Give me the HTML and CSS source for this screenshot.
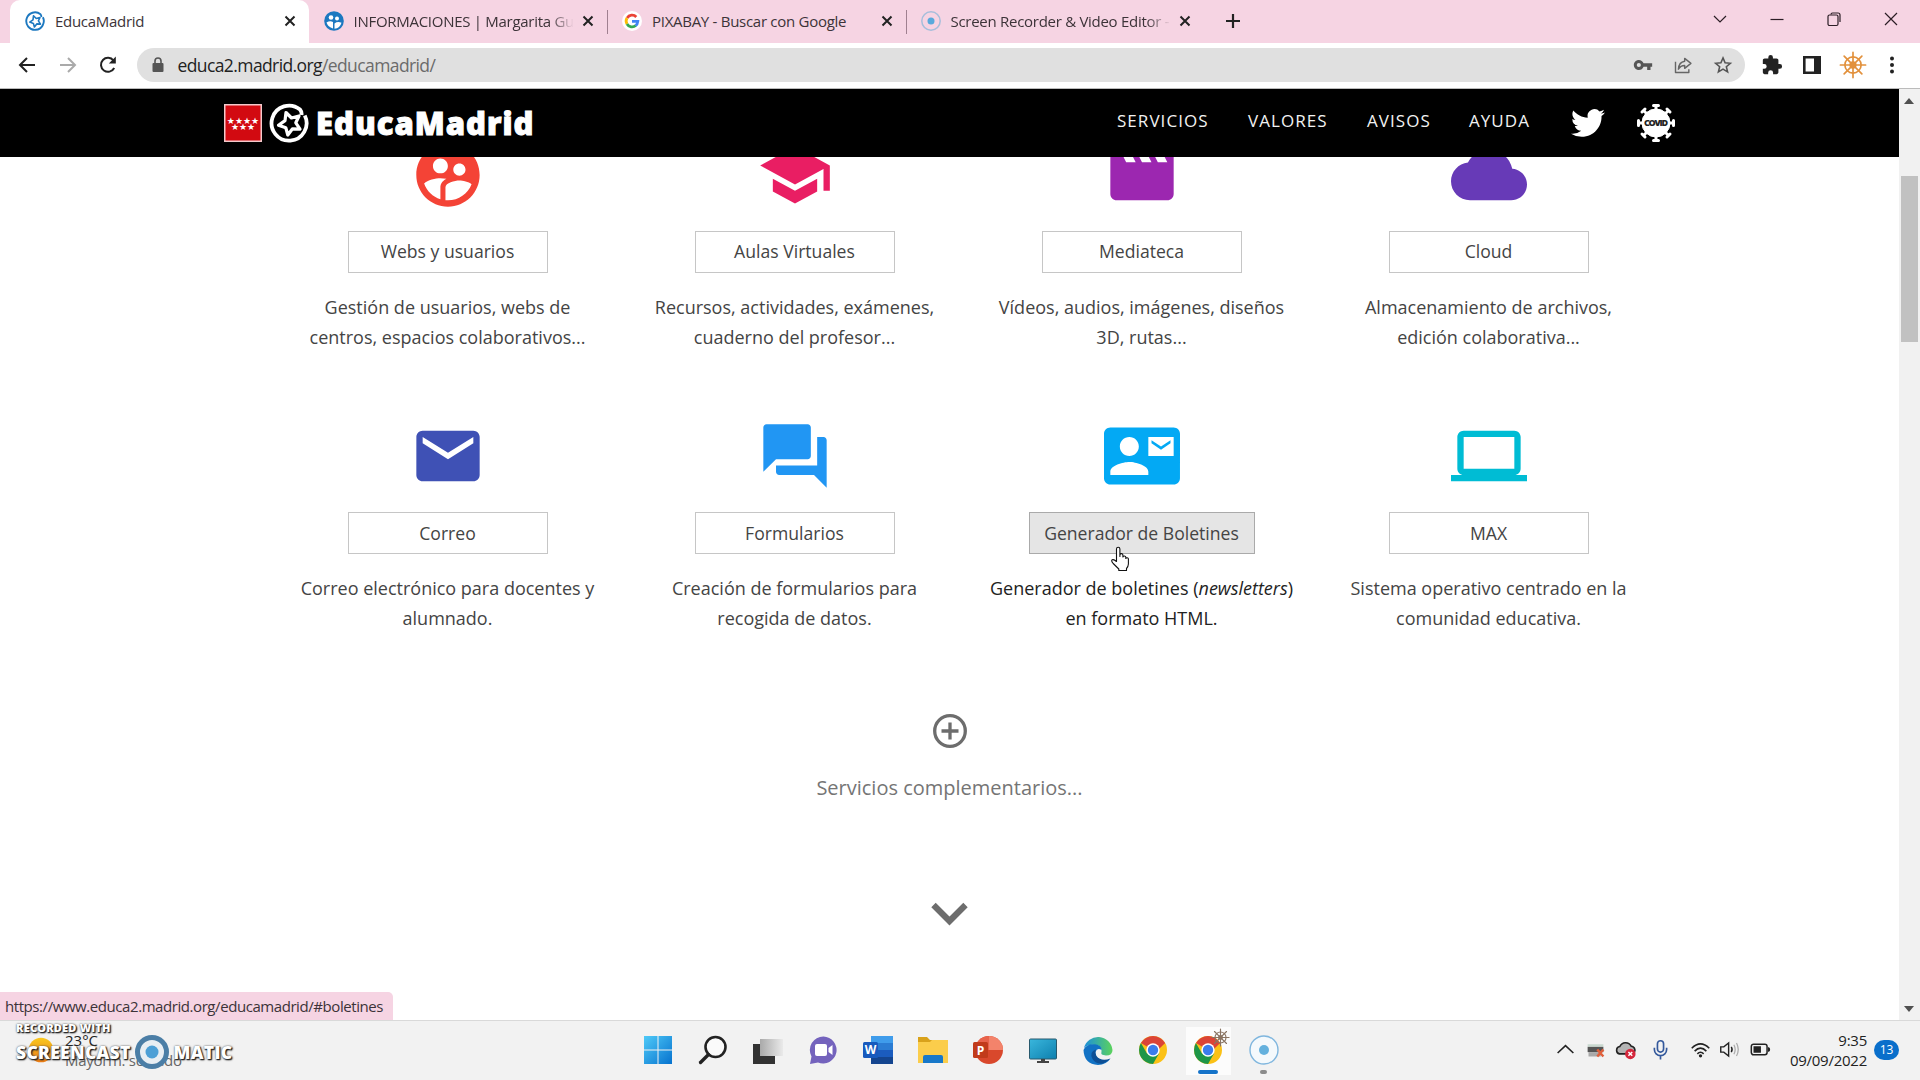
FILE: index.html
```html
<!DOCTYPE html>
<html lang="es">
<head>
<meta charset="utf-8">
<title>EducaMadrid</title>
<link rel="stylesheet" href="styles.css">
</head>
<body>
<svg class="defs" width="0" height="0">
  <defs>
    <symbol id="star-ring" viewBox="0 0 40 40">
      <path d="M35.800 12.500A17.500 17.500 0 1 1 31 6.500Q33 9 32.500 12" fill="none" stroke="currentColor" stroke-width="3.800"/>
      <path d="M17 9.500 22.500 15 30 13 26.800 19.800 31 26.200 23.500 25.800 18.800 32 16.800 24.800 9.500 22.200 16 17.600Z" fill="none" stroke="currentColor" stroke-width="3.200" stroke-linejoin="round"/>
    </symbol>
    <symbol id="close" viewBox="0 0 12 12"><path d="M1.5 1.5 10.500 10.500M10.500 1.500 1.500 10.500" stroke="currentColor" stroke-width="2" fill="none"/></symbol>
    <symbol id="users" viewBox="0 0 24 24"><path d="M11.990 2c-5.520 0-10 4.480-10 10s4.480 10 10 10 10-4.480 10-10-4.480-10-10-10zm3.610 6.340c1.070 0 1.930.860 1.930 1.930 0 1.070-.860 1.930-1.930 1.930-1.070 0-1.930-.860-1.930-1.930-.010-1.070.860-1.930 1.930-1.930zm-6-1.580c1.300 0 2.360 1.060 2.360 2.360 0 1.300-1.060 2.360-2.360 2.360s-2.360-1.060-2.360-2.360c0-1.310 1.050-2.360 2.360-2.360zm0 9.130v3.750c-2.400-.750-4.300-2.600-5.140-4.960 1.050-1.120 3.670-1.690 5.140-1.690.530 0 1.200.080 1.900.220-1.640.870-1.900 2.020-1.900 2.680zM11.990 20c-.270 0-.530-.010-.790-.040v-4.070c0-1.420 2.940-2.130 4.400-2.130 1.070 0 2.920.390 3.840 1.150-1.170 2.970-4.060 5.090-7.450 5.090z"/></symbol>
    <symbol id="chrome" viewBox="0 0 30 30">
      <circle cx="15" cy="15" r="14" fill="#fbc116"/>
      <path d="M15 15 2.900 8A14 14 0 0 1 27.100 8Z" fill="#db4437"/><path d="M15 8H27.100L20 15Z" fill="#db4437"/>
      <path d="M2.900 8A14 14 0 0 0 15 29L21 18.500 15 15 9 18.500Z" fill="#1e9648"/>
      <circle cx="15" cy="15" r="6.700" fill="#fff"/><circle cx="15" cy="15" r="5.200" fill="#3b7ded"/>
    </symbol>
    <symbol id="helm" viewBox="0 0 30 30">
      <g fill="none" stroke="currentColor" stroke-width="1.800" stroke-linecap="round">
        <circle cx="15" cy="15" r="8.700"/><circle cx="15" cy="15" r="3"/>
        <path d="M15 1.500V28.500M1.500 15H28.500M5.500 5.500 24.500 24.500M24.500 5.500 5.500 24.500"/>
      </g>
    </symbol>
  </defs>
</svg>

<header class="tabs">
  <div class="tab active">
    <svg class="fav blue" viewBox="0 0 40 40"><use href="#star-ring"/></svg>
    <span class="title">EducaMadrid</span>
    <svg class="x"><use href="#close"/></svg>
  </div>
  <div class="tab">
    <svg class="fav" viewBox="0 0 20 20"><circle cx="10" cy="10" r="9.800" fill="#1c78c0"/><circle cx="7" cy="6.500" r="2.300" fill="#fff"/><circle cx="13" cy="7.500" r="2" fill="#fff"/><path d="M2.500 11.500q3.500-2 6.500-.5V17.500Q4 16 2.500 11.500ZM10.500 17.800V12.500q3-2.500 7-.8-1.500 5.300-7 6.100Z" fill="#fff"/></svg>
    <span class="title fade">INFORMACIONES | Margarita Gut</span>
    <svg class="x"><use href="#close"/></svg>
  </div>
  <div class="tab ruled">
    <svg class="fav" viewBox="0 0 20 20"><circle cx="10" cy="10" r="10" fill="#fff"/><g fill="none" stroke-width="2.800"><path d="M5.100 7A5.800 5.800 0 0 1 14.300 6" stroke="#ea4335"/><path d="M5 13A5.800 5.800 0 0 1 5 7" stroke="#fbbc05"/><path d="M5 13A5.800 5.800 0 0 0 13.800 14.500" stroke="#34a853"/><path d="M10 10.300H15.800Q15.500 13.300 13.600 14.600" stroke="#4285f4"/></g></svg>
    <span class="title">PIXABAY - Buscar con Google</span>
    <svg class="x"><use href="#close"/></svg>
  </div>
  <div class="tab ruled">
    <svg class="fav" viewBox="0 0 20 20"><circle cx="10" cy="10" r="9.200" fill="none" stroke="#a6bedb" stroke-width="1.500"/><circle cx="10" cy="10" r="3.500" fill="#58a9dc"/></svg>
    <span class="title fade">Screen Recorder &amp; Video Editor -</span>
    <svg class="x"><use href="#close"/></svg>
  </div>
  <div class="newtab"><svg width="16" height="16" viewBox="0 0 16 16"><path d="M8 1V15M1 8H15" stroke="#222" stroke-width="2.200"/></svg></div>
  <div class="winctl">
    <svg viewBox="0 0 16 16"><path d="M2 5 8 11 14 5" /></svg>
    <svg viewBox="0 0 16 16"><path d="M1.500 8.500H14.500"/></svg>
    <svg viewBox="0 0 16 16"><rect x="2" y="4" width="10" height="10.500" rx="1.500"/><path d="M5 3.500Q5 2 6.500 2H12Q14 2 14 4V11"/></svg>
    <svg viewBox="0 0 16 16"><path d="M2 2 14 14M14 2 2 14"/></svg>
  </div>
</header>

<div class="toolbar">
  <svg class="nav-ic" viewBox="0 0 20 20"><path d="M18 10H3M10 3 3 10 10 17"/></svg>
  <svg class="nav-ic off" viewBox="0 0 20 20"><path d="M2 10H17M10 3 17 10 10 17"/></svg>
  <svg class="nav-ic" viewBox="0 0 20 20"><path d="M16.200 13A7 7 0 1 1 15.500 5.500"/><path d="M17.800 1.500V8.500H10.800Z" fill="#222" stroke="none"/></svg>
  <div class="omnibox">
    <svg class="lock" viewBox="0 0 12 16"><rect x=".5" y="6" width="11" height="9" rx="1" fill="#555"/><path d="M3 6V4a3 3 0 0 1 6 0V6" fill="none" stroke="#555" stroke-width="1.600"/></svg>
    <span class="url">educa2.madrid.org<i>/educamadrid/</i></span>
    <div class="omni-ic">
      <svg viewBox="0 0 24 24"><path fill="#555" d="M12.650 10C11.830 7.670 9.610 6 7 6c-3.310 0-6 2.690-6 6s2.690 6 6 6c2.610 0 4.830-1.670 5.650-4H17v4h4v-4h2v-4H12.650zM7 14.500a2.500 2.500 0 1 1 0-5 2.500 2.500 0 0 1 0 5z"/></svg>
      <svg viewBox="0 0 24 24"><path fill="none" stroke="#666" stroke-width="1.700" stroke-linejoin="round" d="M3 8V21H19V17M14 4 21.500 10 14 16V12.500Q9 12.500 6.500 17 7 8.500 14 7.500Z"/></svg>
      <svg viewBox="0 0 24 24"><path fill="none" stroke="#555" stroke-width="1.900" d="M12 3.500 14.500 9.300 20.800 9.900 16 14 17.500 20.200 12 16.900 6.500 20.200 8 14 3.200 9.900 9.500 9.300Z"/></svg>
    </div>
  </div>
  <div class="ext">
    <svg width="22" height="22" viewBox="0 0 24 24"><path fill="#222" d="M20.500 11H19V7c0-1.100-.9-2-2-2h-4V3.500a2.500 2.500 0 0 0-5 0V5H4c-1.100 0-2 .9-2 2v3.800h1.500a2.700 2.700 0 0 1 0 5.400H2V20c0 1.100.9 2 2 2h3.800v-1.500a2.700 2.700 0 0 1 5.400 0V22H17c1.100 0 2-.9 2-2v-4h1.500a2.500 2.500 0 0 0 0-5z"/></svg>
    <svg width="20" height="20" viewBox="0 0 20 20"><path d="M2.300 2.300H17.700V17.700H2.300Z" fill="none" stroke="#222" stroke-width="2.600"/><path d="M12 2H18V18H12Z" fill="#222"/></svg>
    <svg class="wheel" width="28" height="28"><use href="#helm"/></svg>
    <svg width="6" height="20" viewBox="0 0 6 20"><g fill="#222"><circle cx="3" cy="3.500" r="2"/><circle cx="3" cy="10" r="2"/><circle cx="3" cy="16.500" r="2"/></g></svg>
  </div>
</div>

<div class="view">
  <div class="page">
    <nav class="site">
      <div class="brand">
        <svg width="38" height="38" viewBox="0 0 38 38"><rect x=".75" y=".75" width="36.500" height="36.500" fill="#d20a11" stroke="#f4c9cb" stroke-width="1.500"/></svg>
        <span class="stars"><b>★★★★</b><b>★★★</b></span>
        <svg class="ring" width="40" height="40"><use href="#star-ring"/></svg>
        <span class="name">EducaMadrid</span>
      </div>
      <a class="n1">SERVICIOS</a><a class="n2">VALORES</a><a class="n3">AVISOS</a><a class="n4">AYUDA</a>
      <svg class="bird" viewBox="0 0 24 24"><path fill="#fff" d="M23.950 4.570a10 10 0 0 1-2.820.77 4.960 4.960 0 0 0 2.160-2.720c-.950.550-2 .950-3.130 1.180a4.920 4.920 0 0 0-8.380 4.480C7.690 8.100 4.070 6.130 1.640 3.160a4.900 4.900 0 0 0-.670 2.480c0 1.710.870 3.210 2.190 4.100a4.900 4.900 0 0 1-2.230-.62v.060a4.920 4.920 0 0 0 3.950 4.830 5 5 0 0 1-2.210.090 4.940 4.940 0 0 0 4.600 3.420A9.870 9.870 0 0 1 0 19.540a13.990 13.990 0 0 0 7.550 2.210c9.050 0 14-7.500 14-13.980 0-.210 0-.420-.020-.630a9.940 9.940 0 0 0 2.460-2.550z"/></svg>
      <svg class="covid" viewBox="0 0 40 40"><g fill="#fff" stroke="#fff"><circle cx="20" cy="20" r="14"/><path stroke-width="3" d="M20 2V38M2 20H38M7.300 7.300 32.700 32.700M32.700 7.300 7.300 32.700"/><path stroke-width="3" stroke-linecap="round" d="M17.500 2.500H22.500M17.500 37.500H22.500M2.500 17.500V22.500M37.500 17.500V22.500M6 9 9 6M31 6 34 9M6 31 9 34M34 31 31 34"/></g><text x="20" y="23.200" text-anchor="middle" textLength="24" class="cv">COVID</text></svg>
    </nav>

    <main class="grid">
      <section class="card">
        <svg class="ic" fill="#f44336"><use href="#users"/></svg>
        <a class="btn">Webs y usuarios</a>
        <p>Gestión de usuarios, webs de<br>centros, espacios colaborativos...</p>
      </section>
      <section class="card">
        <svg class="ic" viewBox="0 0 24 24" fill="#e91e63"><path d="M5 13.180v4L12 21l7-3.820v-4L12 17l-7-3.820zM12 3 1 9l11 6 9-4.910V17h2V9L12 3z"/></svg>
        <a class="btn">Aulas Virtuales</a>
        <p>Recursos, actividades, exámenes,<br>cuaderno del profesor...</p>
      </section>
      <section class="card">
        <svg class="ic" viewBox="0 0 24 24" fill="#9c27b0"><path d="m18 4 2 4h-3l-2-4h-2l2 4h-3l-2-4H8l2 4H7L5 4H4c-1.100 0-1.990.9-1.990 2L2 18c0 1.100.9 2 2 2h16c1.100 0 2-.9 2-2V4h-4z"/></svg>
        <a class="btn">Mediateca</a>
        <p>Vídeos, audios, imágenes, diseños<br>3D, rutas...</p>
      </section>
      <section class="card">
        <svg class="ic" viewBox="0 0 24 24" fill="#673ab7"><path d="M19.350 10.040C18.670 6.590 15.640 4 12 4 9.110 4 6.600 5.640 5.350 8.040 2.340 8.360 0 10.910 0 14c0 3.310 2.690 6 6 6h13c2.760 0 5-2.240 5-5 0-2.640-2.050-4.780-4.650-4.960z"/></svg>
        <a class="btn">Cloud</a>
        <p>Almacenamiento de archivos,<br>edición colaborativa...</p>
      </section>
      <section class="card low">
        <svg class="ic" viewBox="0 0 24 24" fill="#3f51b5"><path d="M20 4H4c-1.100 0-1.990.9-1.990 2L2 18c0 1.100.9 2 2 2h16c1.100 0 2-.9 2-2V6c0-1.100-.9-2-2-2zm0 4-8 5-8-5V6l8 5 8-5v2z"/></svg>
        <a class="btn">Correo</a>
        <p>Correo electrónico para docentes y<br>alumnado.</p>
      </section>
      <section class="card low">
        <svg class="ic" viewBox="0 0 24 24" fill="#2196f3"><path d="M21 6h-2v9H6v2c0 .55.450 1 1 1h11l4 4V7c0-.55-.450-1-1-1zm-4 6V3c0-.55-.450-1-1-1H3c-.55 0-1 .450-1 1v14l4-4h10c.55 0 1-.450 1-1z"/></svg>
        <a class="btn">Formularios</a>
        <p>Creación de formularios para<br>recogida de datos.</p>
      </section>
      <section class="card low hover">
        <svg class="ic" viewBox="0 0 24 24" fill="#03a9f4"><path d="M21 8V7l-3 2-3-2v1l3 2 3-2zm1-5H2C.9 3 0 3.900 0 5v14c0 1.100.9 2 2 2h20c1.100 0 1.990-.9 1.990-2L24 5c0-1.100-.9-2-2-2zM8 6c1.660 0 3 1.340 3 3s-1.340 3-3 3-3-1.340-3-3 1.340-3 3-3zm6 12H2v-1c0-2 4-3.100 6-3.100s6 1.100 6 3.100v1zm8-6h-8V6h8v6z"/></svg>
        <a class="btn">Generador de Boletines</a>
        <p>Generador de boletines (<em>newsletters</em>)<br>en formato HTML.</p>
      </section>
      <section class="card low">
        <svg class="ic" viewBox="0 0 24 24" fill="#00bcd4"><path d="M20 18c1.100 0 1.990-.9 1.990-2L22 6c0-1.100-.9-2-2-2H4c-1.100 0-2 .9-2 2v10c0 1.100.9 2 2 2H0v2h24v-2h-4zM4 6h16v10H4V6z"/></svg>
        <a class="btn">MAX</a>
        <p>Sistema operativo centrado en la<br>comunidad educativa.</p>
      </section>
    </main>

    <div class="more">
      <svg width="36" height="36" viewBox="0 0 36 36"><g fill="none" stroke="#6d6d6d" stroke-width="3.300"><circle cx="18" cy="18" r="15.300"/><path d="M18 9.500V26.500M9.500 18H26.500"/></g></svg>
      <span>Servicios complementarios...</span>
      <svg class="down" width="38" height="24" viewBox="0 0 38 24"><path d="M2.500 3 18.500 19 34.500 3" fill="none" stroke="#6d6d6d" stroke-width="6.200"/></svg>
    </div>
  </div>
  <aside class="scroll"><i class="up"></i><i class="thumb"></i><i class="dn"></i></aside>
  <div class="status">https://www.educa2.madrid.org/educamadrid/#boletines</div>
  <svg class="hand" viewBox="0 0 20 26"><path d="M6.500 15.500V3a1.700 1.700 0 0 1 3.400 0V10.500 9a1.500 1.500 0 0 1 3 .3V11a1.500 1.500 0 0 1 2.900.2V12.500a1.400 1.400 0 0 1 2.600.4V18Q18.200 21 16.500 22.500V24.500H8.800V23L3.200 17.500Q.8 14.500 2.200 13.800 3.800 13 6.500 15.500Z" fill="#fff" stroke="#111" stroke-width="1.100" stroke-linejoin="round"/></svg>
</div>

<footer class="taskbar">
  <div class="weather">
    <svg width="26" height="26" viewBox="0 0 26 26"><defs><linearGradient id="sun" x2="0" y2="1"><stop stop-color="#f9c81e"/><stop offset="1" stop-color="#ee7d14"/></linearGradient></defs><circle cx="13" cy="13" r="12.300" fill="url(#sun)"/></svg>
    <div><span class="deg">23°C</span><span class="cond">Mayorm. soleado</span></div>
  </div>
  <div class="apps">
    <span><svg viewBox="0 0 30 30"><defs><linearGradient id="win" x2="1" y2="1"><stop stop-color="#4fcaf8"/><stop offset="1" stop-color="#0672ce"/></linearGradient></defs><path fill="url(#win)" d="M1 1H14.500V14.500H1ZM15.500 1H29V14.500H15.500ZM1 15.500H14.500V29H1ZM15.500 15.500H29V29H15.500Z"/></svg></span>
    <span><svg viewBox="0 0 30 30"><circle cx="17.500" cy="12" r="10" fill="#fafafa" stroke="#222" stroke-width="2.600"/><path d="M10.500 19.500 2.500 27.500" stroke="#222" stroke-width="3.300" stroke-linecap="round"/></svg></span>
    <span><svg viewBox="0 0 30 30"><defs><linearGradient id="tv" x2="1"><stop stop-color="#a9a9a9"/><stop offset="1" stop-color="#eaeaea"/></linearGradient></defs><path fill="#333" d="M0 9H22V29H0Z"/><path fill="url(#tv)" d="M7 4H30V21H7Z"/></svg></span>
    <span><svg viewBox="0 0 30 30"><path fill="#7463bd" d="M15.500 1.500A13.500 13.500 0 1 1 10 27.500L2 29 3.500 21.500A13.500 13.500 0 0 1 15.500 1.500Z"/><rect x="7" y="9" width="12" height="12" rx="2" fill="#fff"/><path fill="#fff" d="M20.500 13 24.500 10V20L20.500 17Z"/></svg></span>
    <span><svg viewBox="0 0 30 30"><path fill="#1b5cbe" d="M8 1H30V29H8Z"/><path fill="#3f9ceb" d="M8 1H30V8H8Z"/><path fill="#2b7cd3" d="M8 8H30V15H8Z"/><path fill="#14458f" d="M8 22H30V29H8Z"/><rect y="7" width="15" height="16" rx="1.500" fill="#185abd"/><text x="7.500" y="19" text-anchor="middle" class="lt">W</text></svg></span>
    <span><svg viewBox="0 0 30 30"><path fill="#d9a21b" d="M0 2H9L12 5H20V12H0Z"/><path fill="#fbcd4b" d="M0 7H12L14 5H30V28H0Z"/><path fill="#1878c9" d="M5 28V22Q5 20 7 20H23Q25 20 25 22V28Z"/></svg></span>
    <span><svg viewBox="0 0 30 30"><circle cx="16" cy="15" r="14" fill="#d9482c"/><path fill="#f3836b" d="M16 1A14 14 0 0 1 30 15H16Z"/><path fill="#e8634b" d="M16 1A14 14 0 0 0 2 15H16Z"/><rect y="7" width="15" height="16" rx="1.500" fill="#c13b1b"/><text x="7.500" y="19.500" text-anchor="middle" class="lt">P</text></svg></span>
    <span><svg viewBox="0 0 30 30"><defs><linearGradient id="mon" x2="1" y2="1"><stop stop-color="#3ab7dd"/><stop offset="1" stop-color="#0d7fae"/></linearGradient></defs><rect x="1.500" y="4" width="27" height="20" rx="1" fill="url(#mon)" stroke="#28596d"/><path fill="#444" d="M13 24H17V26H21V28H9V26H13Z"/></svg></span>
    <span><svg viewBox="0 0 30 30"><defs><linearGradient id="eg" x2="1"><stop stop-color="#1c8fdc"/><stop offset="1" stop-color="#5bd35c"/></linearGradient></defs><path fill="url(#eg)" d="M1 13A14.500 14.500 0 0 1 29.500 15Q29.500 20.500 23 20.500 17 20 18.500 17 19.500 11 13 10 5 9 1 13Z"/><path fill="#1272c4" d="M.5 15Q3 8.500 12 9.200 19 10.500 18.600 15 14 12.500 12.500 17 12 25 22 25.500 26 25.500 27.500 23.500 23 30 15 30 1 29 .5 15Z"/><path fill="#0d4f95" d="M12.800 14.500Q6 17 9.500 24 13 29.500 20 28.500 25 26.500 27.500 23.500 18 27 13.500 21 11.500 17.500 12.800 14.500Z"/></svg></span>
    <span><svg><use href="#chrome"/></svg></span>
    <span class="on"><svg><use href="#chrome"/></svg><svg class="mini"><use href="#helm"/></svg></span>
    <span class="run"><svg viewBox="0 0 30 30"><circle cx="15" cy="15" r="14" fill="#f4f9fc" stroke="#7fb6de" stroke-width="1.400"/><circle cx="15" cy="15" r="5" fill="#63b1de"/></svg></span>
  </div>
  <div class="tray">
    <svg viewBox="0 0 24 24"><path d="M3 16 12 7.500 21 16" fill="none" stroke="#222" stroke-width="1.800"/></svg>
    <svg viewBox="0 0 24 24"><path fill="#c9d8cf" d="M3 6H21V9H3Z"/><path fill="#555" d="M3 9H21V15H3Z"/><path fill="#a9a9a9" d="M4 15H18V20H4Z"/><path stroke="#e0603c" stroke-width="2.800" d="M14 12 21 20M21 12 14 20"/></svg>
    <svg viewBox="0 0 24 24"><path fill="#b5b5b5" stroke="#222" stroke-width="1.800" d="M5 17A4.300 4.300 0 0 1 5.500 8.600 7.200 7.200 0 0 1 18.500 8.200 4.600 4.600 0 0 1 20 17Z"/><circle cx="17.500" cy="17" r="6" fill="#d5283d"/><path stroke="#fff" stroke-width="1.700" d="M15.300 14.800 19.700 19.200M19.700 14.800 15.300 19.200"/></svg>
    <svg class="mic" viewBox="0 0 24 24"><g fill="none" stroke="#34599c" stroke-width="1.900"><rect x="8.500" y="2" width="7" height="13" rx="3.500"/><path d="M5 10V12A7 7 0 0 0 19 12V10M12 19V23.500"/></g></svg>
    <svg class="wifi" viewBox="0 0 24 24"><g fill="none" stroke="#222" stroke-width="1.800"><path d="M2 10.500Q12 .5 22 10.500M5.300 13.800Q12 7 18.700 13.800M8.400 17Q12 13.200 15.600 17"/></g><circle cx="12" cy="19.200" r="1.900" fill="#222"/></svg>
    <svg class="vol" viewBox="0 0 24 24"><path fill="none" stroke="#222" stroke-width="1.600" d="M2 9H5.500L11 4.500V19.500L5.500 15H2ZM14 9Q16 12 14 15"/><path fill="none" stroke="#aaa" stroke-width="1.400" d="M17 6.500Q20 12 17 17.500M20 4.500Q24 12 20 19.500"/></svg>
    <svg class="bat" viewBox="0 0 24 24"><rect x="1.500" y="6" width="18" height="12" rx="2.500" fill="none" stroke="#222" stroke-width="1.700"/><path fill="#222" d="M4 8.300H12.500V15.700H4ZM20.500 9.500H21.500Q23 10 23 12T21.500 14.500H20.500Z"/></svg>
    <div class="clock"><span class="time">9:35</span><span class="date">09/09/2022</span></div>
    <b class="badge">13</b>
  </div>
  <div class="mark">
    <span class="rec">RECORDED WITH</span>
    <div class="som"><span class="w1">SCREENCAST</span><svg width="36" height="36" viewBox="0 0 36 36"><circle cx="18" cy="18" r="14.500" fill="#e8eef3" stroke="#4b7ea6" stroke-width="5"/><circle cx="18" cy="18" r="6.500" fill="#4c9fd6"/></svg><span class="w2">MATIC</span></div>
  </div>
</footer>
</body>
</html>
```
FILE: styles.css
```css
* { box-sizing: border-box; }
body { margin: 0; width: 1920px; height: 1080px; overflow: hidden; display: flex; flex-direction: column; background: #fff; font-family: "Open Sans", "Noto Sans", sans-serif; color: #222; }
.defs { position: absolute; }
svg { flex: none; display: block; }

.tabs { height: 43px; background: #f6d4e3; display: flex; padding-left: 10px; flex: none; font-size: 15px; }
.tab { width: 298.500px; display: flex; align-items: center; padding: 0 11px 0 15px; height: 41px; white-space: nowrap; }
.tab.active { background: #fff; border-radius: 10px 10px 0 0; height: 43px; padding-bottom: 2px; }
.tab.ruled { background: linear-gradient(#a08090, #a08090) 0 10px / 1px 24px no-repeat; }
.fav { width: 20px; height: 20px; margin-right: 10px; }
.blue { color: #1c78c0; }
.title { flex: 1; overflow: hidden; color: #3c3338; letter-spacing: -0.280px; }
.fade { -webkit-mask-image: linear-gradient(90deg, #000 88%, transparent 99%); mask-image: linear-gradient(90deg, #000 88%, transparent 99%); }
.x { width: 12px; height: 12px; margin: 0 2px 0 6px; color: #222; }
.newtab { width: 60px; display: flex; align-items: center; justify-content: center; padding-right: 2px; height: 42px; }
.winctl { margin-left: auto; display: flex; height: 37px; align-items: center; gap: 41px; padding-right: 21px; }
.winctl svg { width: 16px; height: 16px; fill: none; stroke: #2b1d25; stroke-width: 1.200; }

.toolbar { height: 46px; flex: none; display: flex; align-items: center; padding: 0 0 1px 17px; border-bottom: 1px solid #bbb; }
.nav-ic { width: 20px; height: 20px; margin-right: 20.500px; fill: none; stroke: #222; stroke-width: 2; }
.off { stroke: #aaa; }
.omnibox { width: 1608px; height: 34px; margin-left: -2px; border-radius: 17px; background: #e0e0e0; display: flex; align-items: center; }
.lock { width: 12px; height: 16px; margin: 0 14px 0 15px; }
.url { font-size: 17.500px; letter-spacing: -0.600px; color: #222; }
.url i { font-style: normal; color: #6b6b6b; }
.omni-ic { margin-left: auto; display: flex; gap: 20px; padding-right: 12px; }
.omni-ic svg { width: 20px; height: 20px; }
.ext { margin-left: auto; display: flex; align-items: center; padding-right: 25px; }
.ext svg:nth-child(2) { margin-left: 19px; }
.wheel { margin: 0 22px 0 17px; color: #e2913c; }

.view { height: 931px; flex: none; display: flex; position: relative; overflow: hidden; }
.page { width: 1899px; display: flex; flex-direction: column; overflow: hidden; }
.site { height: 68px; flex: none; background: #000; position: relative; z-index: 2; display: flex; align-items: center; padding-left: 224px; color: #fff; }
.brand { display: flex; align-items: center; width: 893px; }
.stars { width: 38px; margin-left: -38px; padding-top: 1px; display: flex; flex-direction: column; align-items: center; font: 9px/6px "DejaVu Sans", sans-serif; }
.stars b { font-weight: 400; }
.ring { margin-left: 7px; }
.name { font-size: 31px; font-weight: 800; margin-left: 7px; line-height: 38px; letter-spacing: 1px; -webkit-text-stroke: 1px #fff; }
.site a { font-size: 17px; letter-spacing: 1.050px; line-height: 24px; padding-bottom: 4px; color: #f2f2f2; }
.n1 { width: 131px; } .n2 { width: 119px; } .n3 { width: 102px; } .n4 { width: 102px; }
.bird { width: 34px; height: 34px; }
.covid { width: 40px; height: 40px; margin-left: 31px; }
.cv { font: 800 9px "Open Sans", sans-serif; fill: #222; }

.grid { display: grid; grid-template-columns: repeat(4, 347px); grid-auto-rows: 281px; margin: -20px 0 0 274px; }
.card { display: flex; flex-direction: column; align-items: center; text-align: center; font-size: 18px; line-height: 30px; color: #444; }
.ic { width: 76px; height: 76px; margin-bottom: 18px; }
.btn { min-width: 200px; height: 42px; font-size: 17.600px; line-height: 39px; padding: 0 14px; border: 1px solid #c6c6c6; white-space: nowrap; }
.low .btn { line-height: 41px; }
.card p { margin: 19px 0 0; white-space: nowrap; }
.hover { color: #222; }
.hover .btn { background: #e5e5e5; border-color: #aaa; color: #444; width: 226px; }

.more { display: flex; flex-direction: column; align-items: center; margin-top: 14px; font-size: 20px; line-height: 30px; color: #757575; }
.more span { margin-top: 24px; }
.down { margin-top: 99px; }

.scroll { width: 21px; background: #f1f1f1; display: flex; flex-direction: column; align-items: center; padding: 9px 1px 6px 0; }
.up, .dn { border: 5px solid transparent; }
.up { border-top: 0; border-bottom: 6px solid #505050; }
.dn { border-bottom: 0; border-top: 6px solid #505050; margin-top: auto; margin-bottom: 2px; }
.thumb { width: 17px; height: 166px; margin-top: 72px; background: #c1c1c1; }
.status { position: absolute; left: 0; bottom: 0; width: 393px; height: 28px; line-height: 28px; background: #f6d4e3; border-radius: 0 5px 0 0; padding-left: 5px; font-size: 15px; letter-spacing: -0.430px; white-space: nowrap; color: #3c3338; }
.hand { position: absolute; left: 1110px; top: 457px; width: 20px; height: 26px; }

.taskbar { height: 60px; flex: none; background: #f2f2f2; border-top: 1px solid #d9d9d9; position: relative; display: flex; }
.weather { width: 630px; display: flex; align-items: center; padding: 0 0 2px 28px; font-size: 15px; }
.weather div { margin: 1px 0 0 11px; display: flex; flex-direction: column; line-height: 20px; }
.cond { color: #666; letter-spacing: -0.300px; }
.apps { display: flex; }
.apps span { width: 55.100px; height: 57px; display: flex; align-items: center; justify-content: center; position: relative; }
.apps svg { width: 30px; height: 30px; }
.apps .on { background: linear-gradient(#fcfcfc, #fcfcfc) 5px 6px / 45px 48px no-repeat; }
.apps .mini { position: absolute; right: 6px; top: 7px; width: 19px; height: 19px; color: #8a7462; }
.on::after, .run::after { content: ""; position: absolute; bottom: 4px; width: 20px; height: 4px; border-radius: 2px; background: #1573c9; }
.run::after { width: 7px; background: #8b8b8b; }
.lt { font: 700 12px "Open Sans", sans-serif; fill: #fff; }
.tray { margin-left: auto; display: flex; align-items: center; padding: 0 21px 2px 0; }
.tray svg { width: 21px; height: 21px; margin-right: 9px; }
.tray svg.mic { margin: 0 19px 0 5px; }
.tray svg.wifi { margin-right: 8px; }
.tray svg.vol { margin-right: 10px; }
.tray svg.bat { margin: 0; }
.clock { width: 96px; display: flex; flex-direction: column; align-items: flex-end; font-size: 15px; line-height: 20px; letter-spacing: -0.250px; }
.badge { width: 25px; height: 20px; margin-left: 7px; border-radius: 10px; background: #0a6fcb; color: #fff; font-size: 12px; font-weight: 400; text-align: center; line-height: 20px; }
.mark { position: absolute; left: 16px; top: 0; color: #fff; font-weight: 800; text-shadow: 1px 1px 1px #222, 0 0 2px #555, 1px 1px 2px #333; }
.rec { display: block; font-size: 11px; letter-spacing: .2px; line-height: 14px; margin-top: 0; }
.som { display: flex; align-items: center; font-size: 17.500px; height: 34px; line-height: 34px; letter-spacing: .3px; }
.som svg { margin: 0 4px 0 3px; }
```
